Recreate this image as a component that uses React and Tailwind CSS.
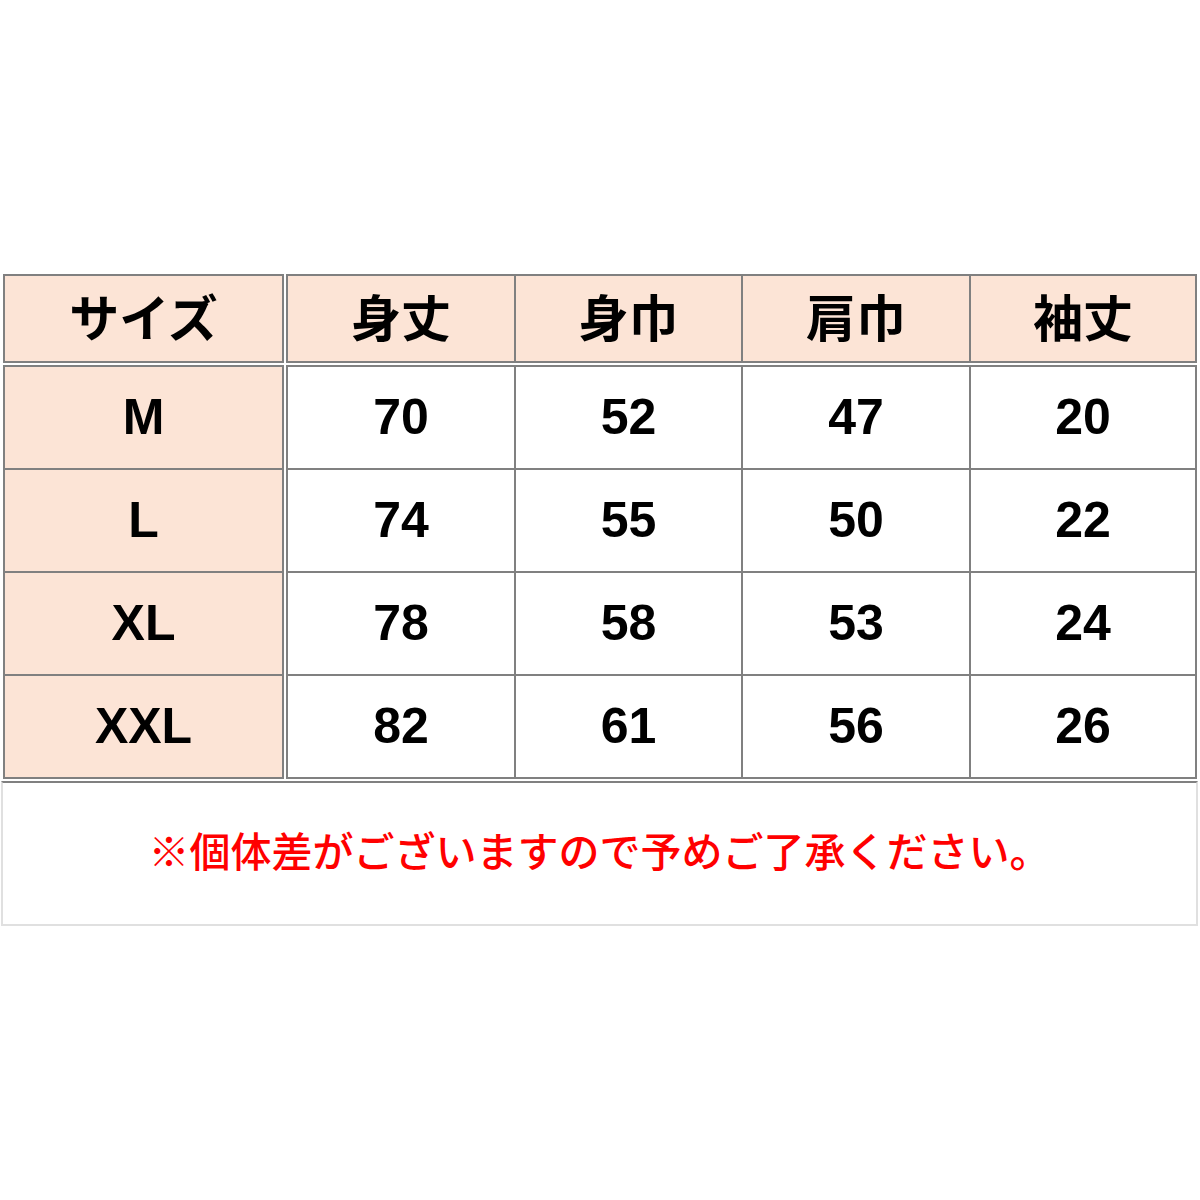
import React from 'react'

const heads = ['身丈', '身巾', '肩巾', '袖丈']
const rows = [
  ['M', '70', '52', '47', '20'],
  ['L', '74', '55', '50', '22'],
  ['XL', '78', '58', '53', '24'],
  ['XXL', '82', '61', '56', '26'],
]
const widths = ['w-[227px]', 'w-[228px]', 'w-[229px]', 'w-[227px]']

const jp = { fontFamily: '"Noto Sans CJK JP", sans-serif' }
const num = { fontFamily: '"Liberation Sans", Arial, sans-serif' }

const App = () => {
  return (
    <div className="w-[1200px] h-[1200px] bg-white relative">
      <div className="pt-[274px] pl-[3px]">
        {/* header */}
        <div className="flex gap-[2px]">
          <div className="w-[281px] h-[89px] pb-[6px] border-2 border-[#808080] bg-[#fce4d6] flex items-center justify-center text-[50px] font-bold text-black" style={jp}>
            サイズ
          </div>
          <div className="w-[911px] h-[89px] border-2 border-[#808080] bg-[#fce4d6] flex">
            {heads.map((h, i) => (
              <div key={h} className={`${widths[i]} ${i > 0 ? 'border-l-2 border-[#808080]' : ''} pb-[6px] flex items-center justify-center text-[50px] font-bold text-black`} style={jp}>
                {h}
              </div>
            ))}
          </div>
        </div>
        {/* body */}
        <div className="flex gap-[2px] mt-[2px]">
          <div className="w-[281px] h-[414px] border-2 border-[#808080] bg-[#fce4d6] flex flex-col">
            {rows.map((r, i) => (
              <div key={r[0]} className={`flex-1 flex items-center justify-center text-[50px] font-bold text-black ${i > 0 ? 'border-t-2 border-[#808080]' : ''}`} style={num}>
                {r[0]}
              </div>
            ))}
          </div>
          <div className="w-[911px] h-[414px] border-2 border-[#808080] bg-white flex flex-col">
            {rows.map((r, i) => (
              <div key={r[0]} className={`flex-1 flex ${i > 0 ? 'border-t-2 border-[#808080]' : ''}`}>
                {r.slice(1).map((v, j) => (
                  <div key={j} className={`${widths[j]} ${j > 0 ? 'border-l-2 border-[#808080]' : ''} flex items-center justify-center text-[50px] font-bold text-black`} style={num}>
                    {v}
                  </div>
                ))}
              </div>
            ))}
          </div>
        </div>
      </div>
      {/* note */}
      <div className="mt-[2px] ml-[1px] w-[1197px] h-[145px] pb-[8px] border-2 border-[#e0e0e0] border-t-[#808080] flex items-center justify-center">
        <span className="text-[41px] font-medium text-[#ff0000]" style={jp}>
          ※個体差がございますので予めご了承ください。
        </span>
      </div>
    </div>
  )
}

export default App
